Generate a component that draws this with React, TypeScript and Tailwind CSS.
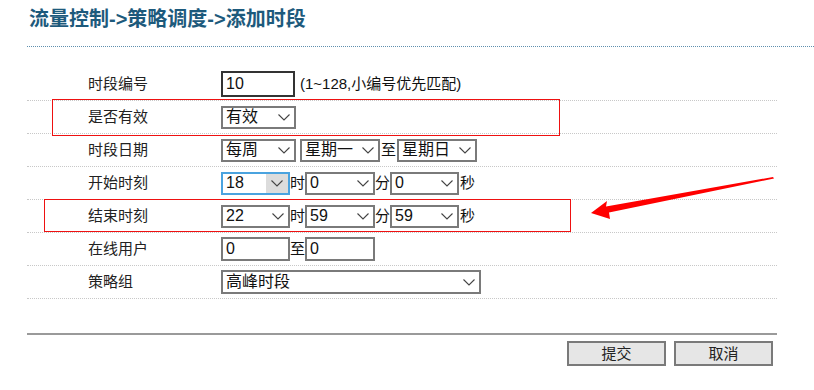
import React from 'react';

const FONT = "font-['Liberation_Sans','Noto_Sans_CJK_SC',sans-serif]";

function Chevron() {
  return (
    <svg width="12" height="7" viewBox="0 0 12 7" className="shrink-0">
      <path d="M0.5 0.5 L6 6 L11.5 0.5" fill="none" stroke="#444" strokeWidth="1.1" />
    </svg>
  );
}

function Select({ value, w, h = 'h-[23px]', focus = false }: { value: string; w: string; h?: string; focus?: boolean }) {
  return (
    <div
      className={`${w} ${h} flex items-center bg-white border-2 ${focus ? 'border-[#4aa3df] border' : 'border-[#7a7a7a]'} text-[16px] text-[#111] leading-none`}
    >
      <span className="flex-1 pl-[3px] whitespace-nowrap">{value}</span>
      {focus ? (
        <span className="w-[22px] h-full bg-[#dcdcdc] flex items-center justify-center">
          <Chevron />
        </span>
      ) : (
        <span className="pr-[4px] flex items-center">
          <Chevron />
        </span>
      )}
    </div>
  );
}

function Input({ value, w, h, dark = false }: { value: string; w: string; h: string; dark?: boolean }) {
  return (
    <div className={`${w} ${h} flex items-center bg-white border-2 ${dark ? 'border-[#333]' : 'border-[#7a7a7a]'} text-[16px] text-[#111] pl-[3px] leading-none`}>
      {value}
    </div>
  );
}

function Row({ label, children }: { label: string; children: React.ReactNode }) {
  return (
    <div className="h-[33px] flex items-center border-b border-dotted border-[#c8c8c8]">
      <div className="w-[194px] pl-[61px] text-[15px] text-[#222]">{label}</div>
      <div className="flex items-center text-[15px] text-[#111]">{children}</div>
    </div>
  );
}

export default function App() {
  return (
    <div className={`relative w-[814px] h-[390px] bg-white overflow-hidden ${FONT}`}>
      <div className="pt-[5px] pl-[29px] h-[46px] text-[20px] leading-[28px] font-bold text-[#1d5a7c]">
        流量控制-&gt;策略调度-&gt;添加时段
      </div>
      <div className="ml-[27px] border-t border-dotted border-[#5f8fae]" />

      <div className="mt-[21px] ml-[27px] w-[750px]">
        <Row label="时段编号">
          <Input value="10" w="w-[74px]" h="h-[26px]" dark />
          <span className="ml-[5px] text-[15px]">(1~128,小编号优先匹配)</span>
        </Row>
        <Row label="是否有效">
          <Select value="有效" w="w-[75px]" />
        </Row>
        <Row label="时段日期">
          <Select value="每周" w="w-[75px]" />
          <div className="w-[4px]" />
          <Select value="星期一" w="w-[80px]" />
          <span className="w-[17px] text-center">至</span>
          <Select value="星期日" w="w-[80px]" />
        </Row>
        <Row label="开始时刻">
          <Select value="18" w="w-[69px]" focus />
          <span className="w-[15px] text-center">时</span>
          <Select value="0" w="w-[70px]" />
          <span className="w-[15px] text-center">分</span>
          <Select value="0" w="w-[69px]" />
          <span className="ml-[1px]">秒</span>
        </Row>
        <Row label="结束时刻">
          <Select value="22" w="w-[69px]" />
          <span className="w-[15px] text-center">时</span>
          <Select value="59" w="w-[70px]" />
          <span className="w-[15px] text-center">分</span>
          <Select value="59" w="w-[69px]" />
          <span className="ml-[1px]">秒</span>
        </Row>
        <Row label="在线用户">
          <Input value="0" w="w-[69px]" h="h-[24px]" />
          <span className="w-[15px] text-center">至</span>
          <Input value="0" w="w-[70px]" h="h-[24px]" />
        </Row>
        <Row label="策略组">
          <Select value="高峰时段" w="w-[260px]" h="h-[24px]" />
        </Row>
      </div>

      <div className="mt-[34px] ml-[27px] w-[750px] border-t-2 border-[#9a9a9a]" />
      <div className="mt-[6px] ml-[567px] flex gap-[8px]">
        <button className="w-[99px] h-[25px] bg-[#e6e6e6] border-2 border-[#7a7a7a] text-[15px] text-[#222] leading-none">提交</button>
        <button className="w-[99px] h-[25px] bg-[#e6e6e6] border-2 border-[#7a7a7a] text-[15px] text-[#222] leading-none">取消</button>
      </div>

      {/* annotation overlays */}
      <div className="absolute left-[52px] top-[99px] w-[508px] h-[37px] border-[1.5px] border-[#ee1111]" />
      <div className="absolute left-[44px] top-[199px] w-[527px] h-[33px] border-[1.5px] border-[#ee1111]" />
      <svg className="absolute left-0 top-0" width="814" height="390">
        <polygon points="591,213 607,201 606,206.5 773,177 774,178.5 609,212.5 610,219" fill="#ff0000" />
      </svg>
    </div>
  );
}
